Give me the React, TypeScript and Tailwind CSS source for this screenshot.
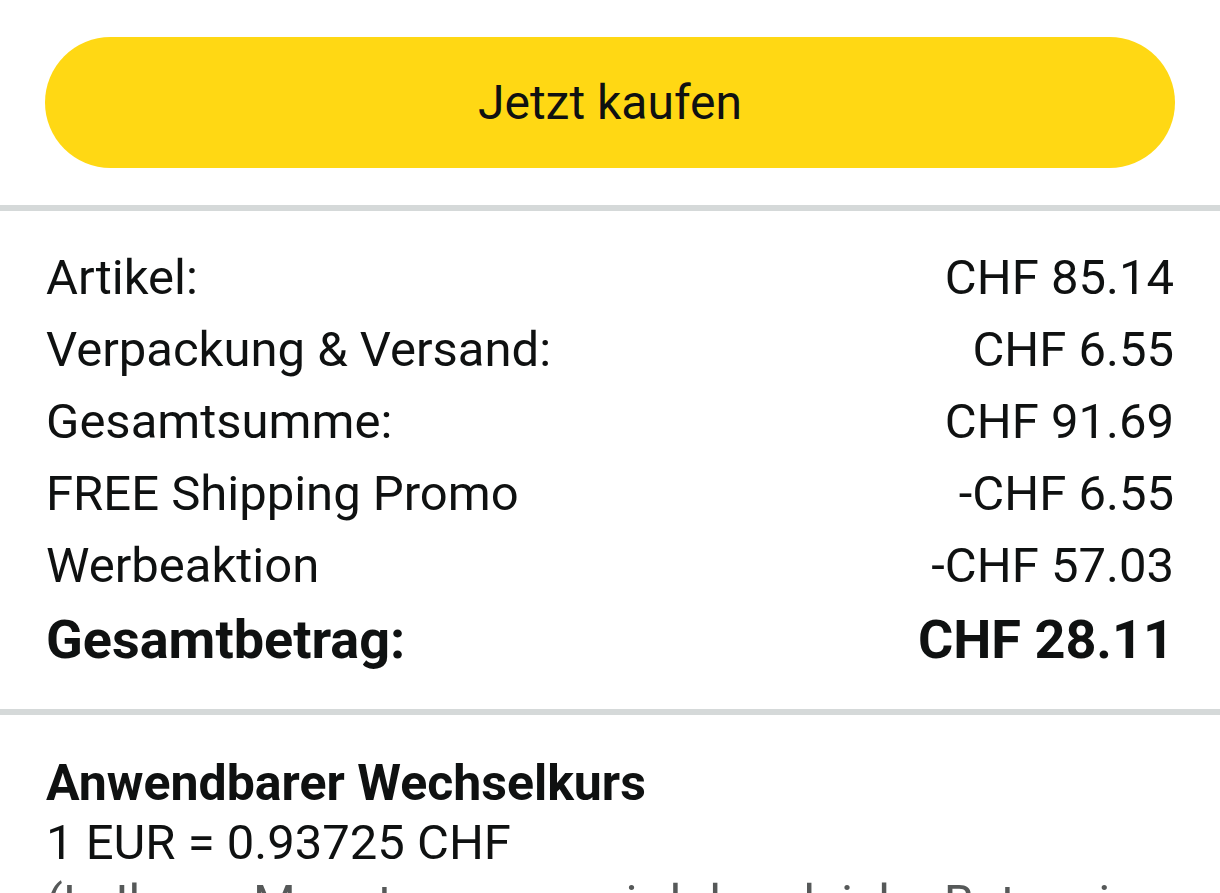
export default function App() {
  const rows = [
    { label: 'Artikel:', value: 'CHF 85.14' },
    { label: 'Verpackung & Versand:', value: 'CHF 6.55' },
    { label: 'Gesamtsumme:', value: 'CHF 91.69' },
    { label: 'FREE Shipping Promo', value: '-CHF 6.55' },
    { label: 'Werbeaktion', value: '-CHF 57.03' },
  ];

  return (
    <div className="min-h-screen bg-white text-[#0F1111] font-['Roboto',sans-serif] overflow-hidden">
      <div className="px-[45px] pt-[37px] pb-[37px]">
        <button className="w-full h-[131px] rounded-full bg-[#FFD814] text-[48px] text-[#0F1111]">
          Jetzt kaufen
        </button>
      </div>

      <div className="h-[6px] bg-[#D5D9D9]" />

      <div className="px-[46px] pt-[31px] pb-[31px]">
        {rows.map(r => (
          <div key={r.label} className="flex justify-between h-[72px] leading-[72px] text-[49px]">
            <span>{r.label}</span>
            <span>{r.value}</span>
          </div>
        ))}
        <div className="flex justify-between h-[76px] leading-[76px] text-[54px] font-bold">
          <span>Gesamtbetrag:</span>
          <span>CHF 28.11</span>
        </div>
      </div>

      <div className="h-[6px] bg-[#D5D9D9]" />

      <div className="px-[46px] pt-[38px] text-[49px] leading-[60px]">
        <p className="font-bold text-[50px]">Anwendbarer Wechselkurs</p>
        <p>1 EUR = 0.93725 CHF</p>
        <p className="text-[#565959] truncate">(In Ihrem Monatsauszug wird der gleiche Betrag in CHF angezeigt)</p>
      </div>
    </div>
  );
}
